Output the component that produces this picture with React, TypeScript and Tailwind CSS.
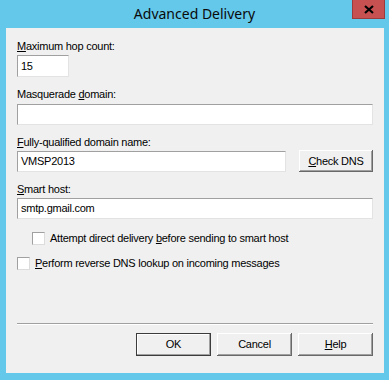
import React from "react";

const font = { fontFamily: '"Liberation Sans", Arial, sans-serif' };

function Field({ value = "", className = "" }: { value?: string; className?: string }) {
  return (
    <div
      className={`flex items-center bg-white pl-[3px] text-[11px] tracking-[-0.25px] text-black border-t border-l border-t-[#a0a0a0] border-l-[#a0a0a0] border-b border-r border-b-[#e3e3e3] border-r-[#e3e3e3] ${className}`}
    >
      {value}
    </div>
  );
}

function Button({ children, isDefault = false, className = "" }: { children: React.ReactNode; isDefault?: boolean; className?: string }) {
  return (
    <button
      className={`flex items-center justify-center bg-[#f0f0f0] text-[11px] tracking-[-0.25px] text-black ${
        isDefault
          ? "border border-[#3c3c3c] shadow-[inset_-1px_-1px_0_#a0a0a0,inset_1px_1px_0_#ffffff]"
          : "shadow-[inset_-1px_-1px_0_#696969,inset_1px_1px_0_#ffffff,inset_-2px_-2px_0_#a0a0a0,inset_2px_2px_0_#f0f0f0]"
      } ${className}`}
    >
      {children}
    </button>
  );
}

function Check({ children, className = "" }: { children: React.ReactNode; className?: string }) {
  return (
    <div className={`flex items-center h-[13px] ${className}`}>
      <div className="w-[13px] h-[13px] bg-white border border-t-[#a0a0a0] border-l-[#a0a0a0] border-b-[#dcdcdc] border-r-[#dcdcdc]" />
      <span className="ml-[5px] text-[11px] leading-[13px] tracking-[-0.25px] text-black">{children}</span>
    </div>
  );
}

function Label({ children, className = "" }: { children: React.ReactNode; className?: string }) {
  return <div className={`h-[13px] text-[11px] leading-[13px] tracking-[-0.25px] text-black ${className}`}>{children}</div>;
}

export default function App() {
  return (
    <div className="w-[389px] h-[380px] bg-[#63c8ea] flex flex-col overflow-hidden" style={font}>
      {/* Title bar */}
      <div className="grid grid-cols-[1fr_auto_1fr] h-[28px] items-start">
        <div />
        <div className="mt-[4px] text-[14px] leading-[20px] text-[#0a0a0a]" style={{ fontFamily: '"Noto Sans", "Open Sans", sans-serif' }}>
          Advanced Delivery
        </div>
        <div className="flex justify-end pr-[4px]">
          <div className="w-[33px] h-[19px] bg-[#c75050] border border-t-0 border-[#9c3b3b] flex items-center justify-center">
            <svg width="10" height="9" viewBox="0 0 10 9">
              <path d="M1 1 L9 8 M9 1 L1 8" stroke="#000" strokeWidth="2.2" />
            </svg>
          </div>
        </div>
      </div>

      {/* Client area */}
      <div className="ml-[6px] w-[378px] h-[345px] bg-[#f0f0f0] flex flex-col px-[11px] pt-[12px]">
        <Label>
          <u>M</u>aximum hop count:
        </Label>
        <Field value="15" className="mt-[2px] w-[52px] h-[22px]" />

        <Label className="mt-[11px]">
          Masquerade <u>d</u>omain:
        </Label>
        <Field className="mt-[3px] w-full h-[21px]" />

        <Label className="mt-[11px]">
          <u>F</u>ully-qualified domain name:
        </Label>
        <div className="mt-[1px] flex items-center gap-[13px]">
          <Field value="VMSP2013" className="w-[269px] h-[21px]" />
          <Button className="w-[74px] h-[22px]">
            <u>C</u>heck DNS
          </Button>
        </div>

        <Label className="mt-[11px]">
          <u>S</u>mart host:
        </Label>
        <Field value="smtp.gmail.com" className="mt-[2px] w-full h-[21px]" />

        <Check className="mt-[13px] ml-[15px]">
          Attempt direct delivery <u>b</u>efore sending to smart host
        </Check>
        <Check className="mt-[12px]">
          <u>P</u>erform reverse DNS lookup on incoming messages
        </Check>

        {/* Separator */}
        <div className="mt-[53px] border-t border-t-[#a0a0a0] border-b border-b-white" />

        {/* Buttons */}
        <div className="mt-[8px] flex justify-end gap-[6px]">
          <Button isDefault className="w-[75px] h-[23px]">
            OK
          </Button>
          <Button className="w-[75px] h-[23px]">Cancel</Button>
          <Button className="w-[75px] h-[23px]">
            <u>H</u>elp
          </Button>
        </div>
      </div>
    </div>
  );
}
